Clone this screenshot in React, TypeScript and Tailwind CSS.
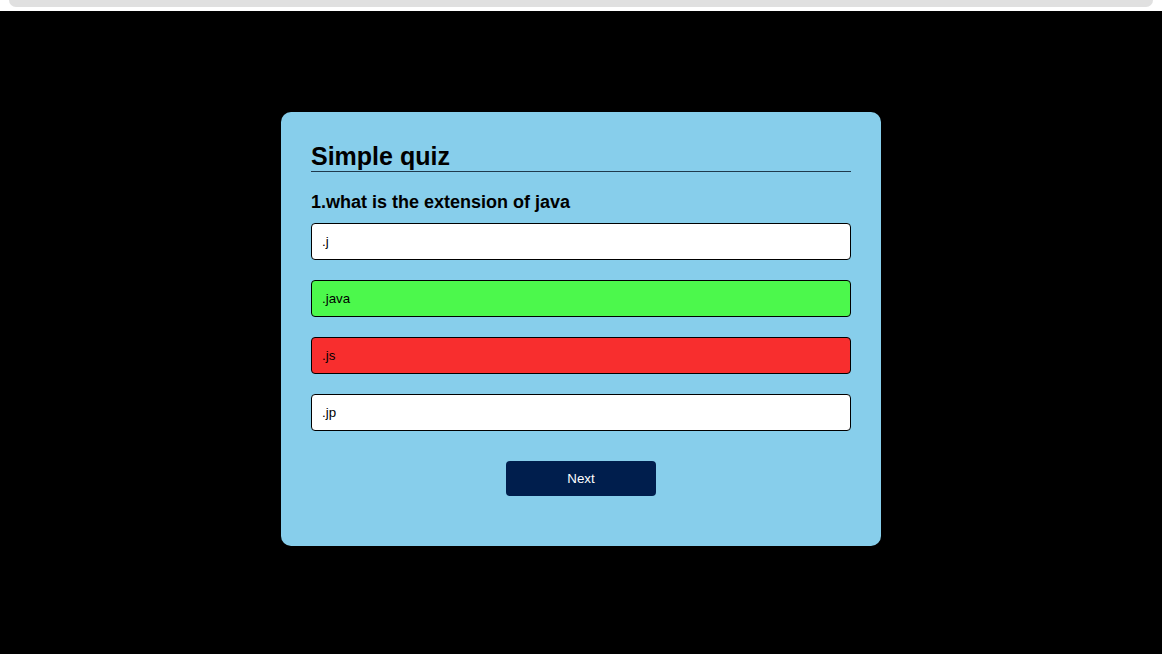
import { useState } from 'react';

const answers = [
  { text: '.j', state: 'none' },
  { text: '.java', state: 'correct' },
  { text: '.js', state: 'wrong' },
  { text: '.jp', state: 'none' },
];

export default function App() {
  const [picked] = useState(2);

  return (
    <div className="min-h-[654px] bg-black font-['Liberation_Sans',Arial,sans-serif]">
      {/* top strip */}
      <div className="h-[11px] bg-white px-[9px]">
        <div className="h-[7px] bg-[#e0e0e0] rounded-b-[7px]" />
      </div>

      <div className="w-[600px] mx-auto mt-[101px] bg-[#87ceeb] rounded-[10px] px-[30px] pt-[30px] pb-[50px]">
        <h1 className="text-[25px] leading-[29px] font-bold text-black border-b border-[#1f3a4d]">
          Simple quiz
        </h1>
        <h2 className="mt-[20px] text-[18px] leading-[21px] font-bold text-black">
          1.what is the extension of java
        </h2>
        <div className="mt-[10px] flex flex-col gap-[20px]">
          {answers.map((a, i) => (
            <button
              key={a.text}
              className={`w-full p-[10px] text-left text-[13.333px] leading-[15px] text-black border border-black rounded-[4px] ${
                a.state === 'correct'
                  ? 'bg-[#4cf84c]'
                  : a.state === 'wrong' && picked === i
                  ? 'bg-[#f82e2e]'
                  : 'bg-white'
              }`}
            >
              {a.text}
            </button>
          ))}
        </div>
        <button className="block mx-auto mt-[30px] w-[150px] p-[10px] text-[13.333px] leading-[15px] text-white bg-[#001e4d] rounded-[4px]">
          Next
        </button>
      </div>
    </div>
  );
}
